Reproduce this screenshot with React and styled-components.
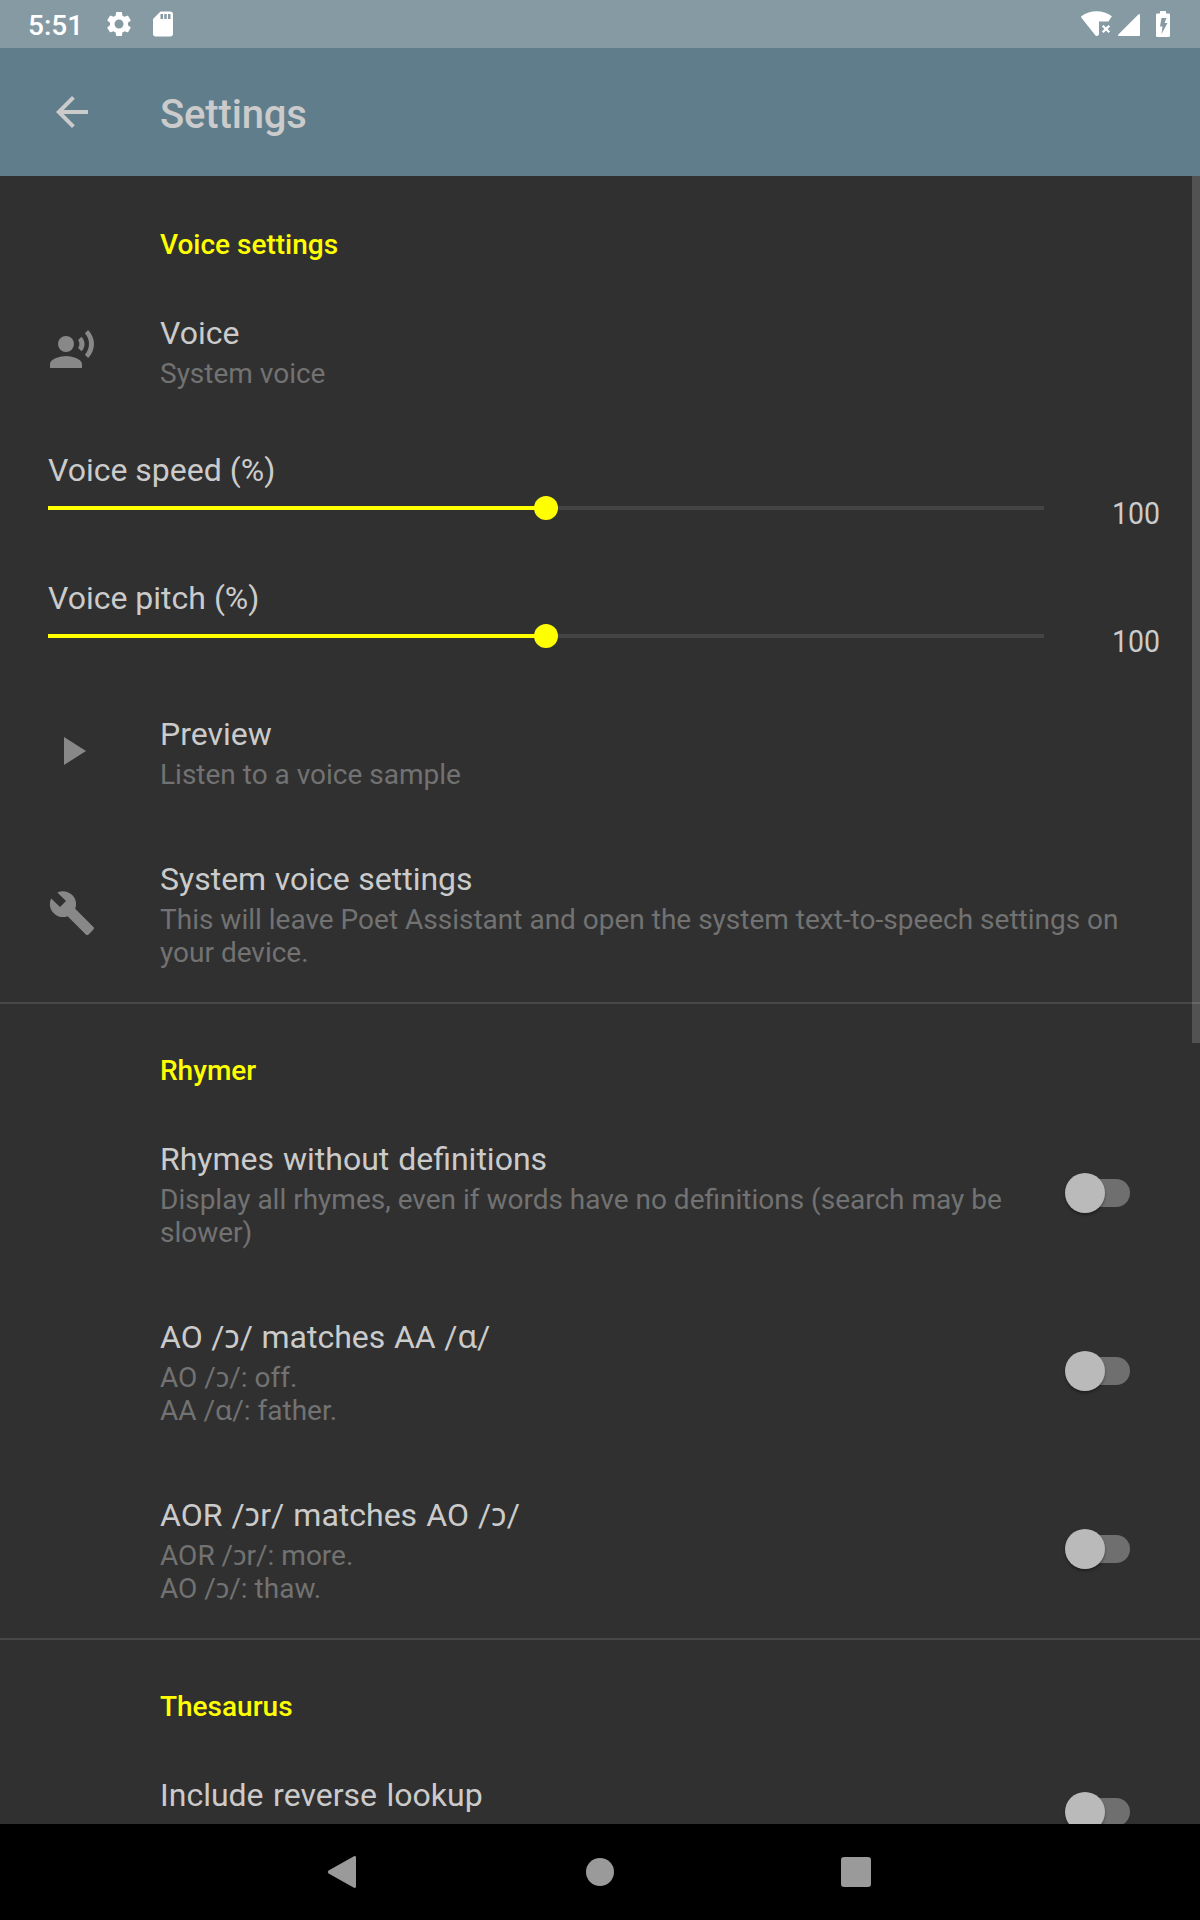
import React from "react";
import styled, { createGlobalStyle } from "styled-components";
import { MdArrowBack, MdRecordVoiceOver, MdPlayArrow, MdBuild, MdSettings, MdSdCard } from "react-icons/md";

const GlobalStyle = createGlobalStyle`
  * { box-sizing: border-box; }
  body {
    margin: 0;
    background: #303030;
    font-family: Roboto, "Noto Sans", sans-serif;
  }
`;

const Screen = styled.div`
  width: 1200px;
  height: 1920px;
  display: flex;
  flex-direction: column;
  overflow: hidden;
  background: #303030;
  color: #cbcbcb;
`;

const StatusBar = styled.header`
  height: 48px;
  flex: none;
  display: flex;
  align-items: center;
  justify-content: space-between;
  padding: 0 30px 0 28px;
  background: #869aa4;
  color: #fff;
`;

const StatusGroup = styled.div`
  display: flex;
  align-items: center;
  gap: ${(p) => p.$gap}px;
  svg { display: block; }
`;

const BatterySlot = styled.div`
  margin-left: 12px;
`;

const Clock = styled.span`
  width: 62px;
  font-size: 28px;
  font-weight: 500;
  line-height: 34px;
  padding-top: 3px;
`;

const AppBar = styled.nav`
  height: 128px;
  flex: none;
  display: grid;
  grid-template-columns: 112px 1fr;
  align-items: center;
  padding-left: 48px;
  background: #607d8b;
`;

const BackButton = styled.button`
  width: 48px;
  height: 48px;
  padding: 0;
  border: 0;
  background: none;
  color: #cbcbcb;
  svg { display: block; }
`;

const AppTitle = styled.h1`
  margin: 6px 0 0;
  font-size: 40px;
  font-weight: 500;
  line-height: 48px;
  letter-spacing: -0.15px;
`;

const Content = styled.main`
  flex: 1;
  min-height: 0;
  overflow: hidden;
  position: relative;
`;

const ScrollThumb = styled.div`
  position: absolute;
  top: 0;
  right: 0;
  width: 8px;
  height: 867px;
  background: rgba(255, 255, 255, 0.17);
`;

const Section = styled.section`
  border-top: ${(p) => (p.$divided ? "2px solid #484848" : "0")};
`;

const Category = styled.h2`
  margin: 0;
  height: ${(p) => (p.$divided ? 100 : 102)}px;
  padding: ${(p) => (p.$divided ? 50 : 52)}px 0 0 160px;
  font-size: 28px;
  font-weight: 500;
  line-height: 33px;
  color: #ffff00;
`;

const Row = styled.div`
  height: ${(p) => p.$height}px;
  display: grid;
  grid-template-columns: 112px 1fr auto;
  grid-template-rows: ${(p) => p.$height - (p.$height % 2)}px;
  padding: 0 70px 0 48px;
  align-items: center;
`;

const RowIcon = styled.div`
  color: #888;
  svg { display: block; }
`;

const RowText = styled.div`
  align-self: start;
  padding-top: 36px;
`;

const RowTitle = styled.div`
  font-size: 32px;
  line-height: 38px;
  word-spacing: ${(p) => p.$wordSpacing || 0}px;
  white-space: nowrap;
`;

const Summary = styled.div`
  margin-top: 5px;
  font-size: 28px;
  line-height: 33px;
  white-space: pre;
  color: #727272;
`;

const SliderRow = styled.div`
  height: 128px;
  display: grid;
  grid-template-columns: 996px 1fr;
  padding: 28px 40px 0 48px;
`;

const SliderMain = styled.div`
  display: flex;
  flex-direction: column;
`;

const Track = styled.div`
  height: 24px;
  margin-top: 7px;
  display: flex;
  align-items: center;
`;

const TrackLine = styled.div`
  flex: 1;
  height: 4px;
  background: ${(p) => (p.$filled ? "#ffff00" : "#444")};
`;

const Knob = styled.div`
  width: 24px;
  height: 24px;
  margin: 0 -12px;
  border-radius: 50%;
  background: #ffff00;
  z-index: 1;
`;

const SliderValue = styled.div`
  margin-top: 43px;
  font-size: 32px;
  line-height: 38px;
  text-align: right;
  transform: scaleX(0.89);
  transform-origin: right;
`;

const SwitchTrack = styled.div`
  width: 56px;
  height: 28px;
  border-radius: 14px;
  background: #6f6f6f;
  display: flex;
  align-items: center;
`;

const SwitchThumb = styled.div`
  width: 40px;
  height: 40px;
  flex: none;
  margin-left: -9px;
  border-radius: 50%;
  background: #bababa;
  box-shadow: 0 2px 3px rgba(0, 0, 0, 0.35);
`;

const NavBar = styled.footer`
  height: 96px;
  flex: none;
  display: flex;
  align-items: center;
  justify-content: center;
  gap: 208px;
  background: #000;
  svg { display: block; }
`;

const WifiOff = () => (
  <svg width="34" height="30" viewBox="0 0 34 30" fill="#fff">
    <path d="M1.3 7.2C6 3.9 11 2.3 16.5 2.3s10.700 1.600 15.400 4.900L28.500 12.500H19V25.500L17.800 26.700Q16.500 27.700 15.300 26.200L1.200 8.500Q.8 7.600 1.300 7.200Z" />
    <path d="M22.700 16.700l6.600 6.600M29.300 16.700l-6.600 6.600" stroke="#fff" strokeWidth="2.300" />
  </svg>
);

const Signal = () => (
  <svg width="24" height="30" viewBox="0 0 24 30" fill="#fff">
    <path d="M23 6.200V26q0 1-1 1H2Q.2 27 1.300 25.500L21.300 5.500Q23 4.200 23 6.200Z" />
  </svg>
);

const Battery = () => (
  <svg width="14" height="30" viewBox="0 0 14 30" fill="#fff">
    <path fillRule="evenodd" d="M4 2h6v2.500h2.700Q14 4.500 14 5.800V26.700Q14 28 12.700 28H1.300Q0 28 0 26.700V5.800Q0 4.500 1.300 4.500H4ZM5.500 9L4 17.500H6.500L5.500 25L11.500 14H8.500L10.500 9Z" />
  </svg>
);

function Preference({ icon, title, lines, toggle, height, wordSpacing = 1 }) {
  return (
    <Row $height={height}>
      <RowIcon>{icon}</RowIcon>
      <RowText>
        <RowTitle $wordSpacing={wordSpacing}>{title}</RowTitle>
        {lines && <Summary>{lines.join("\n")}</Summary>}
      </RowText>
      {toggle && (
        <SwitchTrack role="switch" aria-checked="false">
          <SwitchThumb />
        </SwitchTrack>
      )}
    </Row>
  );
}

function SliderPreference({ title, value }) {
  return (
    <SliderRow>
      <SliderMain>
        <RowTitle>{title}</RowTitle>
        <Track>
          <TrackLine $filled />
          <Knob />
          <TrackLine />
        </Track>
      </SliderMain>
      <SliderValue>{value}</SliderValue>
    </SliderRow>
  );
}

export default function App() {
  return (
    <>
      <GlobalStyle />
      <Screen>
        <StatusBar>
          <StatusGroup $gap={14}>
            <Clock>5:51</Clock>
            <MdSettings size={30} />
            <MdSdCard size={30} />
          </StatusGroup>
          <StatusGroup $gap={3}>
            <WifiOff />
            <Signal />
            <BatterySlot>
              <Battery />
            </BatterySlot>
          </StatusGroup>
        </StatusBar>
        <AppBar>
          <BackButton aria-label="Back">
            <MdArrowBack size={48} />
          </BackButton>
          <AppTitle>Settings</AppTitle>
        </AppBar>
        <Content>
          <Section>
            <Category>Voice settings</Category>
            <Preference height={145} icon={<MdRecordVoiceOver size={48} />} title="Voice" lines={["System voice"]} />
            <SliderPreference title="Voice speed (%)" value="100" />
            <SliderPreference title="Voice pitch (%)" value="100" />
            <Preference height={145} icon={<MdPlayArrow size={48} />} title="Preview" lines={["Listen to a voice sample"]} />
            <Preference
              height={178}
              wordSpacing={0.6}
              icon={<MdBuild size={48} />}
              title="System voice settings"
              lines={["This will leave Poet Assistant and open the system text-to-speech settings on", "your device."]}
            />
          </Section>
          <Section $divided>
            <Category $divided>Rhymer</Category>
            <Preference
              height={178}
              toggle
              title="Rhymes without definitions"
              lines={["Display all rhymes, even if words have no definitions (search may be", "slower)"]}
            />
            <Preference height={178} toggle wordSpacing={0.6} title="AO /ɔ/ matches AA /ɑ/" lines={["AO /ɔ/: off.", "AA /ɑ/: father."]} />
            <Preference height={178} toggle wordSpacing={1.2} title="AOR /ɔr/ matches AO /ɔ/" lines={["AOR /ɔr/: more.", "AO /ɔ/: thaw."]} />
          </Section>
          <Section $divided>
            <Category $divided>Thesaurus</Category>
            <Preference height={145} toggle wordSpacing={1.6} title="Include reverse lookup" />
          </Section>
          <ScrollThumb />
        </Content>
        <NavBar>
          <svg width="48" height="48" viewBox="0 0 48 48" fill="#9a9a9a">
            <path d="M8.600 22.600L33.500 8.400Q36 7.300 36 9.500V38.500Q36 40.700 33.500 39.600L8.600 25.400Q6.800 24 8.600 22.600Z" />
          </svg>
          <svg width="48" height="48" viewBox="0 0 48 48" fill="#9a9a9a">
            <circle cx="24" cy="24" r="14" />
          </svg>
          <svg width="48" height="48" viewBox="0 0 48 48" fill="#9a9a9a">
            <rect x="9" y="9" width="30" height="30" rx="3" />
          </svg>
        </NavBar>
      </Screen>
    </>
  );
}
